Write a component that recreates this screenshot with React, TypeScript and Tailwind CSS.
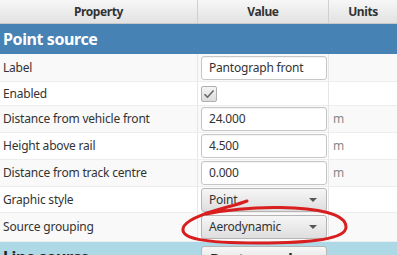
import React from 'react';

interface Row {
  label: string;
  kind: 'text' | 'check' | 'combo';
  value?: string;
  units?: string;
  h: string;
  alt: boolean;
}

const rows: Row[] = [
  { label: 'Label', kind: 'text', value: 'Pantograph front', h: 'h-[28px]', alt: true },
  { label: 'Enabled', kind: 'check', h: 'h-[24px]', alt: false },
  { label: 'Distance from vehicle front', kind: 'text', value: '24.000', units: 'm', h: 'h-[27px]', alt: true },
  { label: 'Height above rail', kind: 'text', value: '4.500', units: 'm', h: 'h-[27px]', alt: false },
  { label: 'Distance from track centre', kind: 'text', value: '0.000', units: 'm', h: 'h-[27px]', alt: true },
  { label: 'Graphic style', kind: 'combo', value: 'Point', h: 'h-[26px]', alt: false },
  { label: 'Source grouping', kind: 'combo', value: 'Aerodynamic', h: 'h-[29px]', alt: true },
];

function Combo({ value }: { value: string }) {
  return (
    <div className="w-[126px] h-[24px] flex items-center justify-between pl-[7px] pr-[9px] rounded-[3px] border border-[#b5b5b5] bg-gradient-to-b from-[#f6f6f6] to-[#dedede] text-[12px] tracking-[-0.2px] text-[#333]">
      <span>{value}</span>
      <span className="w-0 h-0 border-l-[4px] border-r-[4px] border-t-[4px] border-l-transparent border-r-transparent border-t-[#555]" />
    </div>
  );
}

function Value({ row }: { row: Row }) {
  if (row.kind === 'text') {
    return (
      <div className="w-[126px] h-[24px] flex items-center pl-[7px] rounded-[3px] border border-[#c6c6c6] bg-white shadow-[inset_0_1px_1px_rgba(0,0,0,0.05)] text-[12px] tracking-[-0.2px] text-[#333]">
        {row.value}
      </div>
    );
  }
  if (row.kind === 'check') {
    return (
      <div className="w-[16px] h-[16px] flex items-center justify-center rounded-[2px] border border-[#b0b0b0] bg-gradient-to-b from-[#f4f4f4] to-[#dcdcdc]">
        <svg width="12" height="10" viewBox="0 0 12 10">
          <path d="M1.5 5.2 L4.5 8.2 L10.5 1.5" fill="none" stroke="#666" strokeWidth="1.6" />
        </svg>
      </div>
    );
  }
  return <Combo value={row.value ?? ''} />;
}

export default function App() {
  return (
    <div className="relative w-[397px] h-[255px] overflow-hidden bg-white font-['Noto_Sans','Open_Sans',sans-serif] text-[#333]">
      {/* Column headers */}
      <div className="grid grid-cols-[198px_131px_1fr] h-[24px] bg-gradient-to-b from-[#f7f7f7] to-[#e2e2e2] border-b border-[#c8c8c8] text-[12px] tracking-[-0.4px] font-bold text-[#333]">
        <div className="flex items-center justify-center border-r border-[#d0d0d0]">Property</div>
        <div className="flex items-center justify-center border-r border-[#d0d0d0]">Value</div>
        <div className="flex items-center justify-center">Units</div>
      </div>

      {/* Section */}
      <div className="h-[30px] bg-[#4682b4] flex items-center pl-[3px] text-[16px] tracking-[-0.4px] font-bold text-white">
        Point source
      </div>

      {rows.map((row) => (
        <div
          key={row.label}
          className={`grid grid-cols-[198px_131px_1fr] ${row.h} border-b border-[#ededed] ${row.alt ? 'bg-[#f9f9f9]' : 'bg-white'}`}
        >
          <div className="flex items-center pl-[3px] text-[12px] tracking-[-0.2px] border-r border-[#e6e6e6]">{row.label}</div>
          <div className="flex items-center pl-[3px] border-r border-[#e6e6e6]">
            <Value row={row} />
          </div>
          <div className="flex items-center pl-[4px] text-[12px] text-[#888]">{row.units}</div>
        </div>
      ))}

      {/* Next section (cut off) */}
      <div className="grid grid-cols-[198px_131px_1fr] h-[30px] bg-[#add8e6]">
        <div className="pl-[3px] pt-[5px] text-[16px] leading-[20px] tracking-[-0.4px] font-bold text-[#222]">Line source</div>
        <div className="pl-[3px] pt-[4px]">
          <div className="w-[126px] h-[24px] pl-[8px] pt-[1px] rounded-[3px] border border-[#b5b5b5] bg-gradient-to-b from-[#f6f6f6] to-[#dedede] text-[15px] leading-[20px] font-bold text-[#222]">
            Pantograph
          </div>
        </div>
        <div />
      </div>

      {/* Hand-drawn annotation */}
      <svg className="absolute left-0 top-0 pointer-events-none" width="397" height="255" viewBox="0 0 397 255">
        <path
          d="M247,201 C232,207 192,214 184,226 C177,239 205,243 258,243 C312,243 346,239 346,227 C346,214 318,208 280,207.5 C252,207 226,210 206,214"
          fill="none"
          stroke="#d81e1e"
          strokeWidth="3"
          strokeLinecap="round"
        />
      </svg>
    </div>
  );
}
